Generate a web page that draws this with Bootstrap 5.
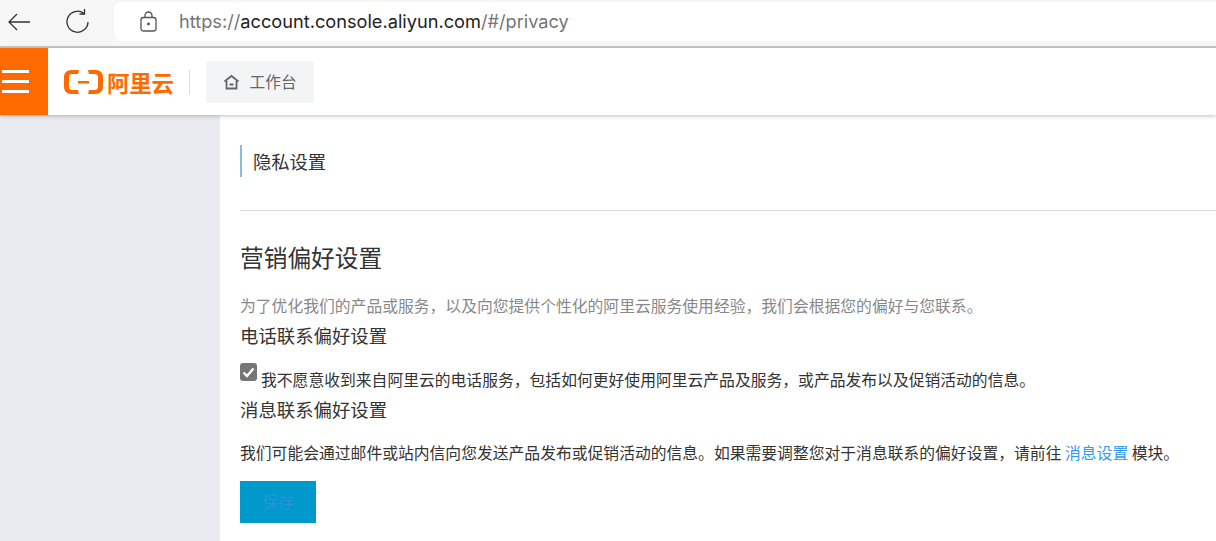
<!DOCTYPE html>
<html lang="zh-CN">
<head>
  <meta charset="UTF-8" />
  <title>隐私设置</title>
  <link href="https://cdn.jsdelivr.net/npm/bootstrap@5.3.0/dist/css/bootstrap.min.css" rel="stylesheet" />
  <style>
    html, body { height: 100%; overflow: hidden; }
    body {
      background: #fff;
      font-family: "Noto Sans CJK SC", "Liberation Sans", sans-serif;
      color: #333;
    }
    .chrome-bar { height: 48px; background: #f6f6f6; border-bottom: 2px solid #c9c9c9; padding-left: 6px; }
    .chrome-btn { width: 27px; height: 27px; margin-top: -3px; }
    .chrome-reload { margin-left: 31px; margin-right: 23px; }
    .url-box {
      height: 39px; margin-top: -4px; padding-left: 26px; background: #fff;
      border-radius: 8px 0 0 8px; font: 18.2px/39px "Inter", "Liberation Sans", sans-serif; color: #757575;
    }
    .url-box b { font-weight: 400; color: #222; }
    .lock-ico { margin-right: 22px; }
    .top-head { height: 67px; background: #fff; box-shadow: 0 1px 4px rgba(0,0,0,.25); position: relative; z-index: 2; }
    .menu-tile { width: 48px; background: #ff6a00; padding-left: 2px; }
    .menu-tile i { display: block; width: 27px; height: 3px; background: #fff; margin-bottom: 7px; }
    .menu-tile i:last-child { margin-bottom: 0; }
    .logo-word { font-size: 22.500px; line-height: 30px; font-weight: 700; color: #ff6a00; margin-left: 4px; letter-spacing: -.3px; }
    .logo-rule { width: 1px; height: 24px; background: #ddd; margin: 0 16px 0 15px; }
    .desk-tab { width: 108px; height: 42px; background: #f3f4f5; border-radius: 2px; font-size: 15.700px; color: #666; gap: 10px; }
    .page-body { height: 426px; }
    .side-col { width: 220px; background: #e9ebf0; flex: none; }
    .main-col { padding: 30px 0 0 20px; }
    .page-title { height: 32px; border-left: 2px solid #8dbbdc; padding-left: 11px; font-size: 18.300px; line-height: 32px; color: #333; }
    .main-rule { border-top: 1px solid #d9d9d9; margin-top: 33px; }
    .pref-title { font-size: 23.700px; line-height: 32px; color: #333; margin-top: 30px; font-weight: 400; }
    .pref-note { font-size: 15.800px; line-height: 22px; color: #888; margin-top: 22px; }
    .pref-sub { font-size: 18.400px; line-height: 26px; color: #333; font-weight: 400; margin-top: 5px; }
    .check-row { font-size: 15.800px; line-height: 22px; color: #333; margin-top: 15px; margin-bottom: 7px; height: 26px; }
    .check-tick { width: 17px; height: 18px; background: #767676; border-radius: 3px; margin-right: 4px; flex: none; }
    .check-text { margin-top: 6px; }
    .msg-line { font-size: 15.800px; line-height: 22px; color: #333; margin-top: 20px; }
    .msg-line a { color: #2d9bef; text-decoration: none; }
    .save-btn {
      width: 76px; height: 42px; margin-top: 17px; background: #0099cc; border: 0; border-radius: 0;
      color: #2f8fe0; font-size: 15.800px; padding: 0;
    }
  </style>
</head>
<body>
  <div class="chrome-bar d-flex align-items-center">
    <svg class="chrome-btn" viewBox="0 0 27 27" fill="none" stroke="#333" stroke-width="1.300"><path d="M24 14H3M11 6l-8 8 8 8"/></svg>
    <svg class="chrome-btn chrome-reload" viewBox="0 0 27 27" fill="none" stroke="#333" stroke-width="1.300"><path d="M20 5.500A10.500 10.500 0 1 0 24 14M20.500 1v5h-5"/></svg>
    <div class="url-box flex-grow-1 d-flex align-items-center">
      <svg class="lock-ico" width="17" height="21" viewBox="0 0 17 21" fill="none" stroke="#555" stroke-width="1.300"><rect x="1" y="6.500" width="15" height="13.500" rx="2.500"/><path d="M5 6.500V4.500a3.500 3.500 0 0 1 7 0v2"/><circle cx="8.500" cy="13" r=".8" fill="#555"/></svg>
      <span>https://<b>account.console.aliyun.com</b>/#/privacy</span>
    </div>
  </div>

  <div class="top-head d-flex">
    <div class="menu-tile d-flex flex-column justify-content-center"><i></i><i></i><i></i></div>
    <div class="d-flex align-items-center ms-3 ps-0">
      <svg width="39" height="24" viewBox="0 0 39 24" fill="#ff6a00"><path d="M15 0H7C3 0 0 3 0 7v10c0 4 3 7 7 7h8l-1-4H8c-1.500 0-3-1-3-3V7c0-2 1.500-3 3-3h6zM24 0h8c4 0 7 3 7 7v10c0 4-3 7-7 7h-8l1-4h6c1.500 0 3-1 3-3V7c0-2-1.500-3-3-3h-6z"/><rect x="14" y="11" width="11" height="2.500"/></svg>
      <span class="logo-word">阿里云</span>
      <span class="logo-rule"></span>
      <div class="desk-tab d-flex align-items-center justify-content-center">
        <svg width="17" height="16" viewBox="0 0 17 16" fill="none" stroke="#666" stroke-width="1.800"><path d="M1.500 7.500 8.500 2l7 5.500M3.500 7v7.500h10V7M6.500 10.500h4"/></svg>
        <span>工作台</span>
      </div>
    </div>
  </div>

  <div class="page-body d-flex">
    <div class="side-col"></div>
    <div class="main-col flex-grow-1">
      <div class="page-title">隐私设置</div>
      <div class="main-rule"></div>
      <h4 class="pref-title mb-0">营销偏好设置</h4>
      <div class="pref-note">为了优化我们的产品或服务，以及向您提供个性化的阿里云服务使用经验，我们会根据您的偏好与您联系。</div>
      <h6 class="pref-sub mb-0">电话联系偏好设置</h6>
      <div class="check-row d-flex">
        <span class="check-tick d-flex align-items-center justify-content-center">
          <svg width="13" height="11" viewBox="0 0 13 11" fill="none" stroke="#fff" stroke-width="2.400"><path d="M1.500 5.500 5 9l6.500-7.500"/></svg>
        </span>
        <span class="check-text">我不愿意收到来自阿里云的电话服务，包括如何更好使用阿里云产品及服务，或产品发布以及促销活动的信息。</span>
      </div>
      <h6 class="pref-sub mb-0">消息联系偏好设置</h6>
      <div class="msg-line">我们可能会通过邮件或站内信向您发送产品发布或促销活动的信息。如果需要调整您对于消息联系的偏好设置，请前往 <a href="#">消息设置</a> 模块。</div>
      <button type="button" class="btn save-btn">保存</button>
    </div>
  </div>

  <script src="https://cdn.jsdelivr.net/npm/bootstrap@5.3.0/dist/js/bootstrap.bundle.min.js"></script>
</body>
</html>
